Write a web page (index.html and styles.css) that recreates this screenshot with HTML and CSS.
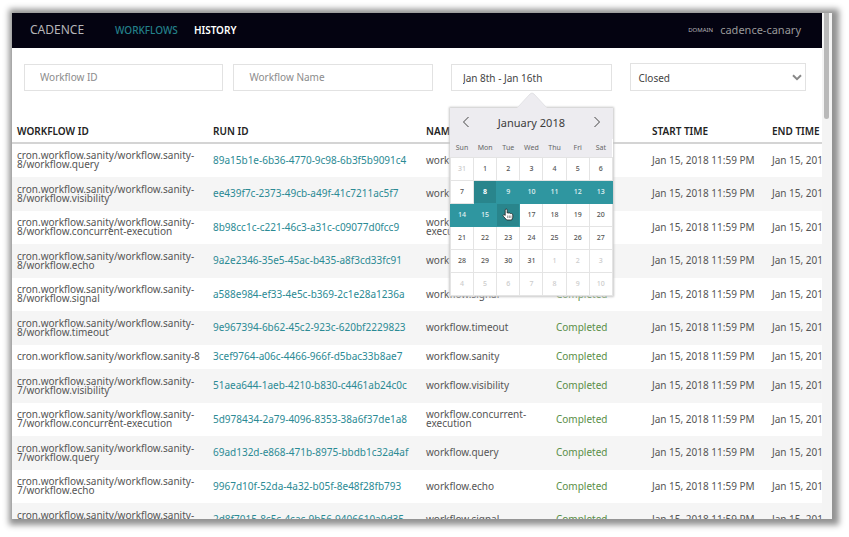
FILE: index.html
```html
<!DOCTYPE html>
<html lang="en">
<head>
<meta charset="utf-8">
<title>Cadence</title>
<link rel="stylesheet" href="styles.css">
</head>
<body>
<div class="window">
  <div class="page">
    <header class="topbar">
      <a class="brand" href="#">CADENCE</a>
      <nav class="nav">
        <a class="active" href="#">WORKFLOWS</a>
        <a class="current" href="#">HISTORY</a>
      </nav>
      <div class="domain"><span class="domain-label">DOMAIN</span><span>cadence-canary</span></div>
    </header>
    <main>
      <form class="filters">
        <div class="names">
          <input class="field" type="text" placeholder="Workflow ID" aria-label="Workflow ID">
          <input class="field" type="text" placeholder="Workflow Name" aria-label="Workflow Name">
        </div>
        <div class="range">
          <input class="field range-input" type="text" value="Jan 8th - Jan 16th" aria-label="Date range">
          <div class="calendar">
            <svg class="pointer" viewBox="0 0 30 16" aria-hidden="true"><path d="M0 16 L1 15 L13 2 Q15 0 17 2 L29 15 L30 16Z" fill="#edecf0"/><path d="M1 15 L13 2 Q15 0 17 2 L29 15" fill="none" stroke="#e3e3e6"/></svg>
            <div class="month">
              <button type="button" aria-label="Previous month"><svg viewBox="0 0 8 12"><path d="M6.500 1 L1.500 6 L6.500 11"/></svg></button>
              <span>January 2018</span>
              <button type="button" aria-label="Next month"><svg viewBox="0 0 8 12"><path d="M1.500 1 L6.500 6 L1.500 11"/></svg></button>
            </div>
            <table class="days">
              <thead><tr><th>Sun</th><th>Mon</th><th>Tue</th><th>Wed</th><th>Thu</th><th>Fri</th><th>Sat</th></tr></thead>
              <tbody>
                <tr><td class="out">31</td><td>1</td><td>2</td><td>3</td><td>4</td><td>5</td><td>6</td></tr>
                <tr><td>7</td><td class="sel end">8</td><td class="sel">9</td><td class="sel">10</td><td class="sel">11</td><td class="sel">12</td><td class="sel">13</td></tr>
                <tr><td class="sel">14</td><td class="sel">15</td><td class="sel end" aria-label="16"><svg class="hand" viewBox="0 0 12 13" aria-hidden="true"><path d="M3.200 7.500V2.200q0-1.200 1-1.200t1 1.200V5q1-.8 1.600.2 1-.7 1.600.3 1-.5 1.500.5.9 0 .9 1v2.200L9.700 12H4.700L1.400 8.300Q.6 7.100 1.600 6.700 2.400 6.500 3.200 7.500Z" fill="#fff" stroke="#222" stroke-width=".8"/><path d="M5.700 7.500v2.500M7.300 7.500v2.500M8.900 7.500v2.500" stroke="#444" stroke-width=".6"/></svg></td><td>17</td><td>18</td><td>19</td><td>20</td></tr>
                <tr><td>21</td><td>22</td><td>23</td><td>24</td><td>25</td><td>26</td><td>27</td></tr>
                <tr><td>28</td><td>29</td><td>30</td><td>31</td><td class="out">1</td><td class="out">2</td><td class="out">3</td></tr>
                <tr><td class="out">4</td><td class="out">5</td><td class="out">6</td><td class="out">7</td><td class="out">8</td><td class="out">9</td><td class="out">10</td></tr>
              </tbody>
            </table>
          </div>
        </div>
        <div class="status">
          <select class="field" aria-label="Status"><option>Closed</option><option>Open</option></select>
          <svg viewBox="0 0 10 7" aria-hidden="true"><path d="M1 1.300 L5 5.200 L9 1.300"/></svg>
        </div>
      </form>
      <table class="runs">
        <colgroup><col class="c-id"><col class="c-run"><col class="c-name"><col class="c-status"><col class="c-start"><col></colgroup>
        <thead><tr><th>WORKFLOW ID</th><th>RUN ID</th><th>NAME</th><th>STATUS</th><th>START TIME</th><th>END TIME</th></tr></thead>
        <tbody>
          <tr><td>cron.workflow.sanity/workflow.sanity-<br>8/workflow.query</td><td><a href="#">89a15b1e-6b36-4770-9c98-6b3f5b9091c4</a></td><td>workflow.query</td><td class="done">Completed</td><td>Jan 15, 2018 11:59 PM</td><td>Jan 15, 2018 11:59 PM</td></tr>
          <tr><td>cron.workflow.sanity/workflow.sanity-<br>8/workflow.visibility</td><td><a href="#">ee439f7c-2373-49cb-a49f-41c7211ac5f7</a></td><td>workflow.visibility</td><td class="done">Completed</td><td>Jan 15, 2018 11:59 PM</td><td>Jan 15, 2018 11:59 PM</td></tr>
          <tr><td>cron.workflow.sanity/workflow.sanity-<br>8/workflow.concurrent-execution</td><td><a href="#">8b98cc1c-c221-46c3-a31c-c09077d0fcc9</a></td><td>workflow.concurrent-<br>execution</td><td class="done">Completed</td><td>Jan 15, 2018 11:59 PM</td><td>Jan 15, 2018 11:59 PM</td></tr>
          <tr><td>cron.workflow.sanity/workflow.sanity-<br>8/workflow.echo</td><td><a href="#">9a2e2346-35e5-45ac-b435-a8f3cd33fc91</a></td><td>workflow.echo</td><td class="done">Completed</td><td>Jan 15, 2018 11:59 PM</td><td>Jan 15, 2018 11:59 PM</td></tr>
          <tr><td>cron.workflow.sanity/workflow.sanity-<br>8/workflow.signal</td><td><a href="#">a588e984-ef33-4e5c-b369-2c1e28a1236a</a></td><td>workflow.signal</td><td class="done">Completed</td><td>Jan 15, 2018 11:59 PM</td><td>Jan 15, 2018 11:59 PM</td></tr>
          <tr><td>cron.workflow.sanity/workflow.sanity-<br>8/workflow.timeout</td><td><a href="#">9e967394-6b62-45c2-923c-620bf2229823</a></td><td>workflow.timeout</td><td class="done">Completed</td><td>Jan 15, 2018 11:59 PM</td><td>Jan 15, 2018 11:59 PM</td></tr>
          <tr><td>cron.workflow.sanity/workflow.sanity-8</td><td><a href="#">3cef9764-a06c-4466-966f-d5bac33b8ae7</a></td><td>workflow.sanity</td><td class="done">Completed</td><td>Jan 15, 2018 11:59 PM</td><td>Jan 15, 2018 11:59 PM</td></tr>
          <tr><td>cron.workflow.sanity/workflow.sanity-<br>7/workflow.visibility</td><td><a href="#">51aea644-1aeb-4210-b830-c4461ab24c0c</a></td><td>workflow.visibility</td><td class="done">Completed</td><td>Jan 15, 2018 11:59 PM</td><td>Jan 15, 2018 11:59 PM</td></tr>
          <tr><td>cron.workflow.sanity/workflow.sanity-<br>7/workflow.concurrent-execution</td><td><a href="#">5d978434-2a79-4096-8353-38a6f37de1a8</a></td><td>workflow.concurrent-<br>execution</td><td class="done">Completed</td><td>Jan 15, 2018 11:59 PM</td><td>Jan 15, 2018 11:59 PM</td></tr>
          <tr><td>cron.workflow.sanity/workflow.sanity-<br>7/workflow.query</td><td><a href="#">69ad132d-e868-471b-8975-bbdb1c32a4af</a></td><td>workflow.query</td><td class="done">Completed</td><td>Jan 15, 2018 11:59 PM</td><td>Jan 15, 2018 11:59 PM</td></tr>
          <tr><td>cron.workflow.sanity/workflow.sanity-<br>7/workflow.echo</td><td><a href="#">9967d10f-52da-4a32-b05f-8e48f28fb793</a></td><td>workflow.echo</td><td class="done">Completed</td><td>Jan 15, 2018 11:59 PM</td><td>Jan 15, 2018 11:59 PM</td></tr>
          <tr><td>cron.workflow.sanity/workflow.sanity-<br>7/workflow.signal</td><td><a href="#">2d8f7015-8c5c-4cac-9b56-9406610a9d35</a></td><td>workflow.signal</td><td class="done">Completed</td><td>Jan 15, 2018 11:59 PM</td><td>Jan 15, 2018 11:59 PM</td></tr>
        </tbody>
      </table>
    </main>
  </div>
  <div class="scrollbar"><div class="thumb"></div></div>
</div>
</body>
</html>
```
FILE: styles.css
```css
* { box-sizing: border-box; }

body {
  margin: 0;
  height: 100vh;
  padding: 13px 17px 18px 12px;
  overflow: hidden;
  background: #fff;
  color: #555;
  font: 10px/9px "Noto Sans", "Open Sans", sans-serif;
}

a { color: inherit; text-decoration: none; }
svg { display: block; fill: none; }

.window {
  display: flex;
  height: 100%;
  background: #fff;
  box-shadow: 2px 1px 6px 5px #929292;
}

.page { flex: 1; min-width: 0; overflow: hidden; }

.scrollbar {
  width: 10px;
  padding: 0 3px 0 2px;
  background: #f4f4f4;
}
.thumb { height: 21%; border-radius: 0 0 3px 3px; background: #b9b9b9; }

/* Top bar */
.topbar {
  display: flex;
  align-items: center;
  height: 35px;
  padding: 0 21px 2px 18px;
  background: #040311;
  color: #999;
  font-size: 11px;
  line-height: 16px;
}
.brand { width: 85px; color: #b5b5b8; font-size: 12px; }
.nav { display: flex; gap: 16px; font-size: 10px; font-weight: 500; }
.nav .active { color: #23808a; }
.nav .current { color: #fff; font-weight: 600; }
.domain { display: flex; align-items: center; gap: 7px; margin-left: auto; }
.domain-label { color: #b5b5b8; font-size: 6px; }

/* Filters */
.filters {
  display: flex;
  align-items: flex-end;
  gap: 18px;
  padding: 15px 16px 16px 12px;
}
.names { display: flex; flex: 410; gap: 10px; min-width: 0; }
.range { position: relative; flex: 162; min-width: 0; }
.status { position: relative; flex: 176; min-width: 0; }
.field {
  display: block;
  width: 100%;
  height: 27px;
  margin: 0;
  padding: 0 15px 2px;
  border: 1px solid #e2e2e2;
  border-radius: 0;
  outline: 0;
  background: #fff;
  color: #444;
  font: 10px/14px "Noto Sans", "Open Sans", sans-serif;
}
.field::placeholder { color: #8c8c8c; opacity: 1; }
.range-input { padding: 0 11px; }
.status .field { height: 28px; padding: 1px 7px 0; appearance: none; }
.status svg {
  position: absolute;
  top: 11px;
  right: 4px;
  width: 10px;
  height: 7px;
  stroke: #888;
  stroke-width: 2;
  pointer-events: none;
}

/* Calendar */
.calendar {
  position: absolute;
  top: 100%;
  left: -1px;
  z-index: 1;
  width: 163px;
  margin-top: 17px;
  background: #edecf0;
  box-shadow: 0 0 2px 1px #c8c8c8;
}
.pointer {
  position: absolute;
  bottom: 100%;
  left: 67px;
  width: 30px;
  height: 16px;
}
.month {
  display: flex;
  align-items: center;
  justify-content: space-between;
  height: 31px;
  padding: 0 12px 3px;
  font-size: 11px;
  line-height: 15px;
  color: #3c3c3c;
}
.month button { padding: 0; border: 0; background: none; }
.month svg { width: 8px; height: 12px; stroke: #444; }
.days {
  width: 100%;
  border-collapse: collapse;
  table-layout: fixed;
  background: #fff;
  text-align: center;
  font-size: 7px;
}
.days th {
  height: 18px;
  padding: 0;
  background: #edecf0;
  color: #666;
  font-weight: 400;
}
.days td {
  height: 23px;
  padding: 0;
  border: 1px solid #e4e4e4;
  font-weight: 500;
}
.days .out { color: #ccc; }
.days .sel { border-color: #2f96a0; background: #2f96a0; color: #e3f2f3; }
.days .end { background: #29858c; color: #fff; font-weight: 700; }
.hand { width: 12px; height: 13px; margin: 0 auto; }

/* Workflow runs */
.runs {
  width: 115%;
  border-collapse: collapse;
  table-layout: fixed;
}
.c-id { width: 196px; }
.c-run { width: 213px; }
.c-name { width: 130px; }
.c-status { width: 96px; }
.c-start { width: 120px; }
.runs th {
  height: 36px;
  padding: 14px 0 0 5px;
  border-bottom: 2px solid #d4d4d4;
  color: #222;
  font-weight: 600;
  text-align: left;
}
.runs td {
  padding: 7px 0 8px 5px;
  white-space: nowrap;
}
.runs tbody tr { height: 33px; }
.runs tbody tr:nth-child(even) { height: 34px; background: #f5f5f5; }
.runs tbody tr:nth-child(7) { height: 24px; }
.runs a { color: #2b8a94; }
.runs .done { color: #5a8f48; }
```
